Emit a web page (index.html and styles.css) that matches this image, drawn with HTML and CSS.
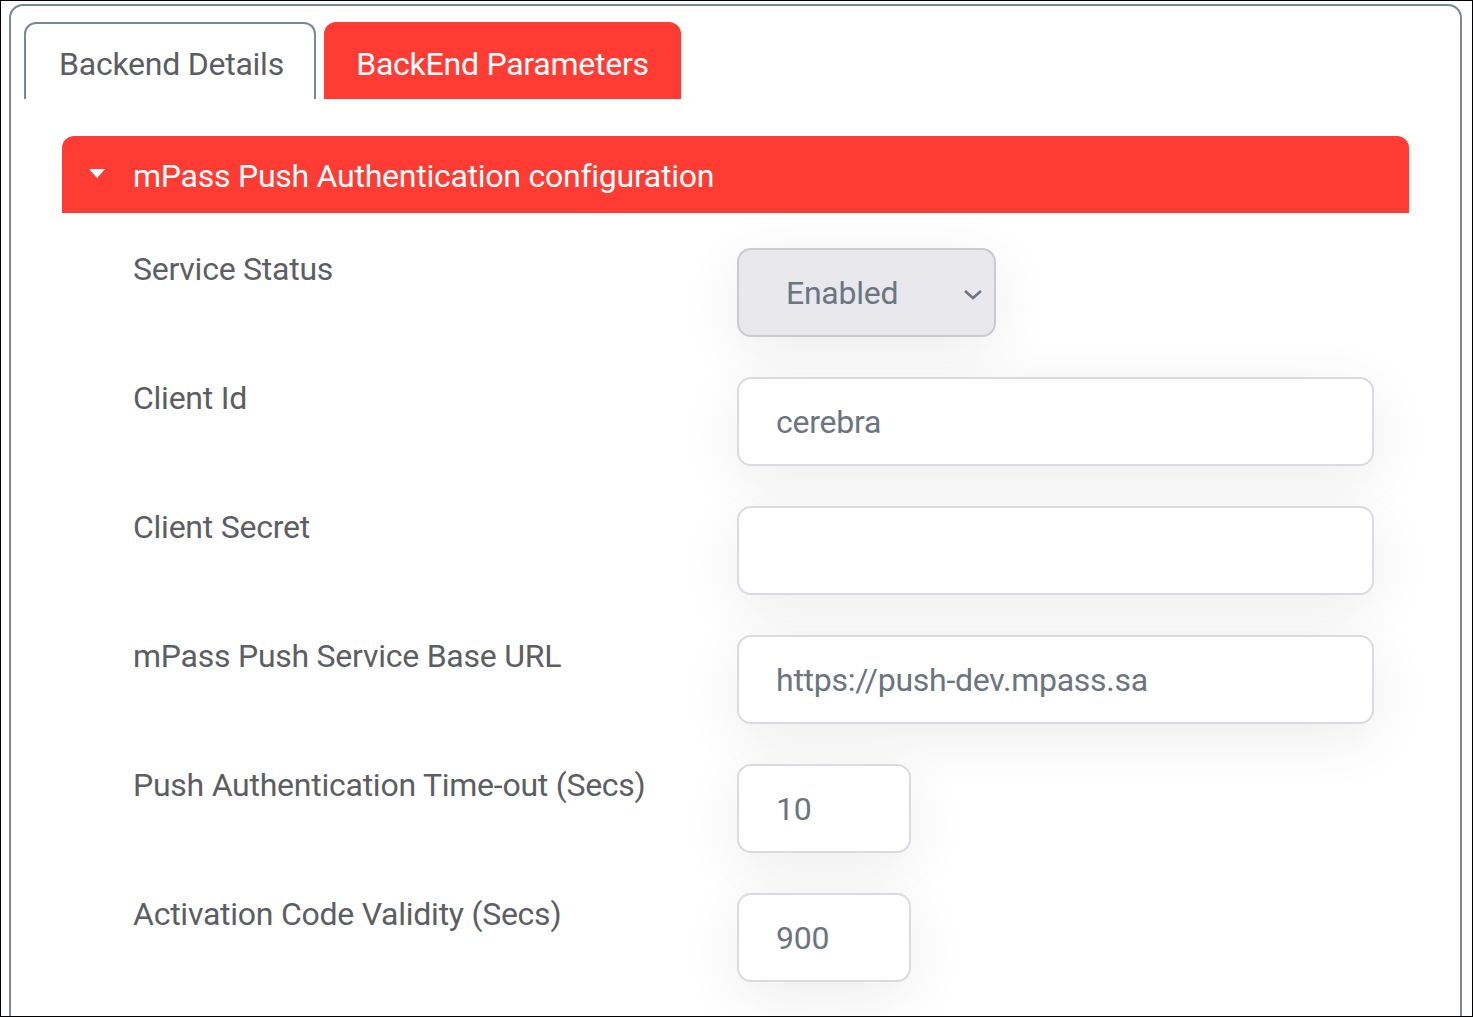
FILE: index.html
```html
<!DOCTYPE html>
<html lang="en">
<head>
<meta charset="utf-8">
<title>BackEnd Parameters</title>
<link rel="stylesheet" href="styles.css">
</head>
<body>
<div class="frame">
  <div class="panel">
    <div class="tabs">
      <div class="tab tab-plain">Backend Details</div>
      <div class="tab tab-active">BackEnd Parameters</div>
    </div>
    <div class="section">
      <div class="section-head">
        <svg class="caret" width="16" height="10" viewBox="0 0 16 10"><path d="M0 0 H16 L8 9 Z" fill="#fff"/></svg>
        <span>mPass Push Authentication configuration</span>
      </div>
      <div class="form">
        <div class="row">
          <label class="label">Service Status</label>
          <div class="select">
            <span>Enabled</span>
            <svg class="chev" width="22" height="12" viewBox="0 0 22 12"><path d="M3 3 L11 10 L19 3" fill="none" stroke="#6c7683" stroke-width="2.6"/></svg>
          </div>
        </div>
        <div class="row">
          <label class="label">Client Id</label>
          <input class="field wide" type="text" value="cerebra" readonly>
        </div>
        <div class="row">
          <label class="label">Client Secret</label>
          <input class="field wide" type="text" value="" readonly>
        </div>
        <div class="row">
          <label class="label">mPass Push Service Base URL</label>
          <input class="field wide" type="text" value="https://push-dev.mpass.sa" readonly>
        </div>
        <div class="row">
          <label class="label">Push Authentication Time-out (Secs)</label>
          <input class="field narrow" type="text" value="10" readonly>
        </div>
        <div class="row">
          <label class="label">Activation Code Validity (Secs)</label>
          <input class="field narrow" type="text" value="900" readonly>
        </div>
      </div>
    </div>
  </div>
</div>
</body>
</html>
```
FILE: styles.css
```css
* { box-sizing: border-box; }
html, body { margin: 0; padding: 0; background: #fff; }
body {
  font-family: Roboto, "Liberation Sans", sans-serif;
  font-size: 32px;
  letter-spacing: -0.25px;
}

.frame {
  width: 1473px;
  height: 1017px;
  border: 1px solid #000;
  overflow: hidden;
  padding: 3px 0 0 8px;
}

.panel {
  width: 1453px;
  height: 1100px;
  border: 2px solid #7a8795;
  border-radius: 14px 14px 0 0;
  padding: 16px 0 0 13px;
}

.tabs { display: flex; gap: 8px; height: 77px; }

.tab {
  height: 77px;
  padding-top: 7px;
  line-height: 70px;
  text-align: center;
  border-radius: 12px 12px 0 0;
  font-size: 32px;
}
.tab-plain {
  width: 292px;
  border: 2px solid #7a8795;
  border-bottom: none;
  padding-top: 5px;
  padding-left: 3px;
  color: #5a5d62;
}
.tab-active {
  width: 357px;
  background: #ff3c33;
  color: #fff;
}

.section { margin: 37px 51px 0 38px; }

.section-head {
  height: 77px;
  background: #ff3c33;
  border-radius: 12px 12px 0 0;
  display: flex;
  align-items: center;
  padding: 3px 0 0 27px;
  color: #fff;
}
.caret { margin-right: 28px; margin-top: -4px; }

.form {
  padding: 35px 35px 0 71px;
  display: flex;
  flex-direction: column;
  gap: 40px;
}

.row { display: flex; align-items: flex-start; }

.label {
  width: 604px;
  flex: none;
  padding-top: 3px;
  color: #5b5e63;
  line-height: 37px;
}

.field, .select {
  height: 89px;
  border: 2px solid #d8dce1;
  border-radius: 14px;
  background: #fff;
  font-family: Roboto, "Liberation Sans", sans-serif;
  font-size: 32px;
  letter-spacing: -0.25px;
  color: #6c7480;
  padding: 0 37px;
  box-shadow: 0 14px 60px rgba(0, 0, 0, 0.075);
  outline: none;
}
.wide { width: 637px; }
.narrow { width: 174px; }

.select {
  width: 259px;
  background: #e9e9ed;
  border-color: #c9cbd0;
  display: flex;
  align-items: center;
  justify-content: space-between;
  padding: 0 10px 0 47px;
  color: #6c7683;
}
.chev { margin-top: 2px; }
```
